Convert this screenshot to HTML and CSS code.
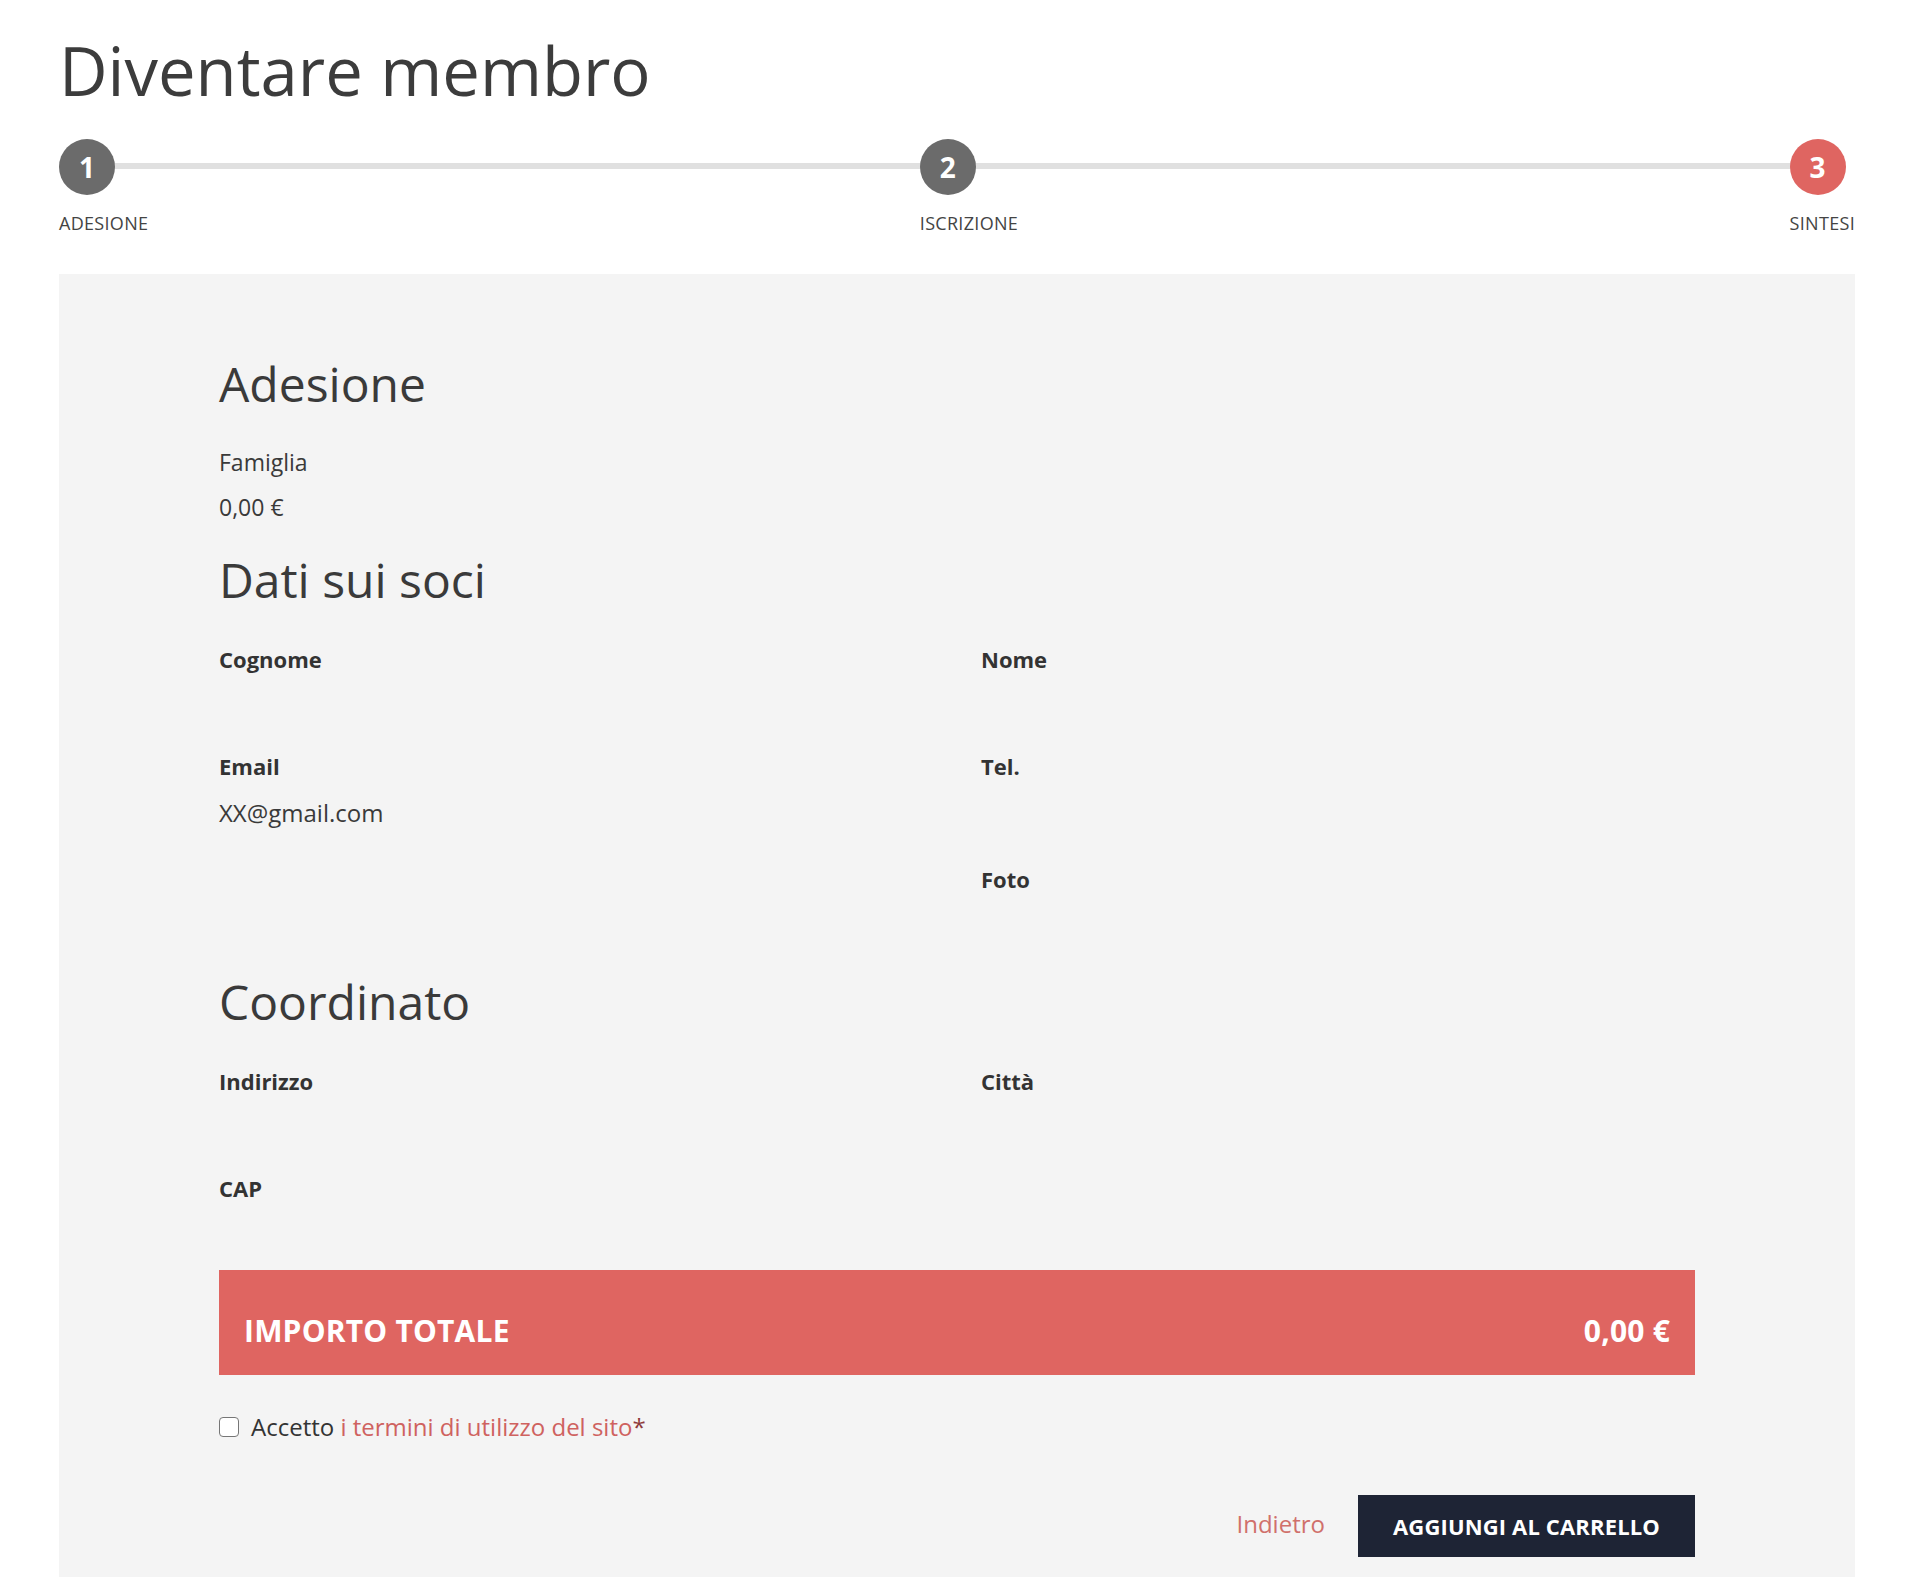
FILE: index.html
```html
<!DOCTYPE html>
<html lang="it">
<head>
<meta charset="utf-8">
<title>Diventare membro</title>
<link rel="stylesheet" href="styles.css">
</head>
<body>
<div class="page">
  <h1 class="title">Diventare membro</h1>

  <ol class="steps">
    <li class="step">
      <span class="step-num">1</span>
      <span class="step-label">ADESIONE</span>
    </li>
    <li class="step">
      <span class="step-num">2</span>
      <span class="step-label">ISCRIZIONE</span>
    </li>
    <li class="step step-active">
      <span class="step-num">3</span>
      <span class="step-label">SINTESI</span>
    </li>
  </ol>

  <main class="panel">
    <section class="block">
      <h2 class="block-title">Adesione</h2>
      <p class="plain">Famiglia</p>
      <p class="plain">0,00 €</p>
    </section>

    <section class="block">
      <h2 class="block-title">Dati sui soci</h2>
      <div class="fields">
        <div class="field">
          <div class="field-label">Cognome</div>
          <div class="field-value"></div>
        </div>
        <div class="field">
          <div class="field-label">Nome</div>
          <div class="field-value"></div>
        </div>
        <div class="field field-tall">
          <div class="field-label">Email</div>
          <div class="field-value">XX@gmail.com</div>
        </div>
        <div class="field field-tall">
          <div class="field-label">Tel.</div>
          <div class="field-value"></div>
        </div>
        <div class="field"></div>
        <div class="field">
          <div class="field-label">Foto</div>
          <div class="field-value"></div>
        </div>
      </div>
    </section>

    <section class="block">
      <h2 class="block-title">Coordinato</h2>
      <div class="fields fields-last">
        <div class="field">
          <div class="field-label">Indirizzo</div>
          <div class="field-value"></div>
        </div>
        <div class="field">
          <div class="field-label">Città</div>
          <div class="field-value"></div>
        </div>
        <div class="field">
          <div class="field-label">CAP</div>
          <div class="field-value"></div>
        </div>
      </div>
    </section>

    <div class="total">
      <span class="total-label">IMPORTO TOTALE</span>
      <span class="total-amount">0,00 €</span>
    </div>

    <label class="terms">
      <input type="checkbox" class="terms-box">
      <span>Accetto <a href="#" class="terms-link">i termini di utilizzo del sito</a><span class="req">*</span></span>
    </label>

    <div class="actions">
      <a href="#" class="back">Indietro</a>
      <button type="button" class="cart">AGGIUNGI AL CARRELLO</button>
    </div>
  </main>
</div>
</body>
</html>
```

FILE: styles.css
```css
* {
  box-sizing: border-box;
}

html, body {
  margin: 0;
  padding: 0;
  background: #ffffff;
}

body {
  font-family: "Open Sans", "Noto Sans", sans-serif;
  color: #333333;
}

.page {
  width: 1796px;
  margin-left: 59px;
}

.title {
  margin: 28px 0 0 0;
  font-size: 67px;
  line-height: 84px;
  font-weight: 400;
  color: #3c3c3c;
}

.steps {
  list-style: none;
  margin: 27px 0 0 0;
  padding: 0;
  display: flex;
  justify-content: space-between;
  background-image: linear-gradient(#e0e0e0, #e0e0e0);
  background-repeat: no-repeat;
  background-size: calc(100% - 80px) 6px;
  background-position: 28px 24px;
}

.step {
  display: flex;
  flex-direction: column;
  align-items: flex-start;
}

.step-num {
  width: 56px;
  height: 56px;
  border-radius: 50%;
  background: #6b6b6b;
  color: #ffffff;
  font-weight: 700;
  font-size: 28px;
  line-height: 56px;
  text-align: center;
}

.step-active .step-num {
  background: #df6561;
}

.step-label {
  margin-top: 16px;
  font-size: 18px;
  line-height: 24px;
  letter-spacing: 0.3px;
  color: #444444;
}

.panel {
  margin-top: 39px;
  background: #f4f4f4;
  padding: 81px 160px 40px 160px;
}

.block-title {
  margin: 0;
  font-size: 48px;
  line-height: 58px;
  font-weight: 400;
  color: #3a3a3a;
}

.plain {
  margin: 0;
  font-size: 23px;
  line-height: 45px;
  color: #3a3a3a;
}

.block-title + .plain {
  margin-top: 27px;
}

.plain:last-child {
  margin-bottom: 21px;
}

.fields {
  margin-top: 35px;
  display: grid;
  grid-template-columns: 1fr 1fr;
  column-gap: 48px;
  row-gap: 27px;
  margin-bottom: 29px;
}

.field-tall {
  padding-bottom: 6px;
}

.fields-last {
  margin-bottom: 17px;
}

.field-label {
  font-size: 22px;
  line-height: 30px;
  font-weight: 700;
  color: #333333;
}

.field-value {
  margin-top: 14px;
  min-height: 36px;
  font-size: 24px;
  line-height: 36px;
  color: #3a3a3a;
}

.total {
  display: flex;
  justify-content: space-between;
  align-items: flex-start;
  height: 105px;
  padding: 40px 25px 0 25px;
  background: #df6561;
  color: #ffffff;
  font-size: 30px;
  line-height: 41px;
  font-weight: 700;
  letter-spacing: 0.2px;
}

.terms {
  margin-top: 34px;
  display: flex;
  align-items: center;
  gap: 12px;
  font-size: 24px;
  line-height: 36px;
  color: #333333;
}

.terms-box {
  appearance: none;
  -webkit-appearance: none;
  margin: 0;
  width: 20px;
  height: 20px;
  border: 1.5px solid #767676;
  border-radius: 4px;
  background: #ffffff;
}

.terms-link {
  color: #cf625f;
  text-decoration: none;
}

.req {
  color: #8e3b3b;
}

.actions {
  margin-top: 50px;
  display: flex;
  justify-content: flex-end;
  align-items: center;
  gap: 33px;
}

.back {
  font-size: 24px;
  line-height: 36px;
  margin-bottom: 4px;
  color: #d0706b;
  text-decoration: none;
}

.cart {
  height: 62px;
  padding: 0 35px;
  border: 0;
  border-radius: 0;
  background: #1e2435;
  color: #ffffff;
  font-family: "Open Sans", "Noto Sans", sans-serif;
  font-size: 22px;
  line-height: 62px;
  font-weight: 700;
  letter-spacing: 0.15px;
}
```
